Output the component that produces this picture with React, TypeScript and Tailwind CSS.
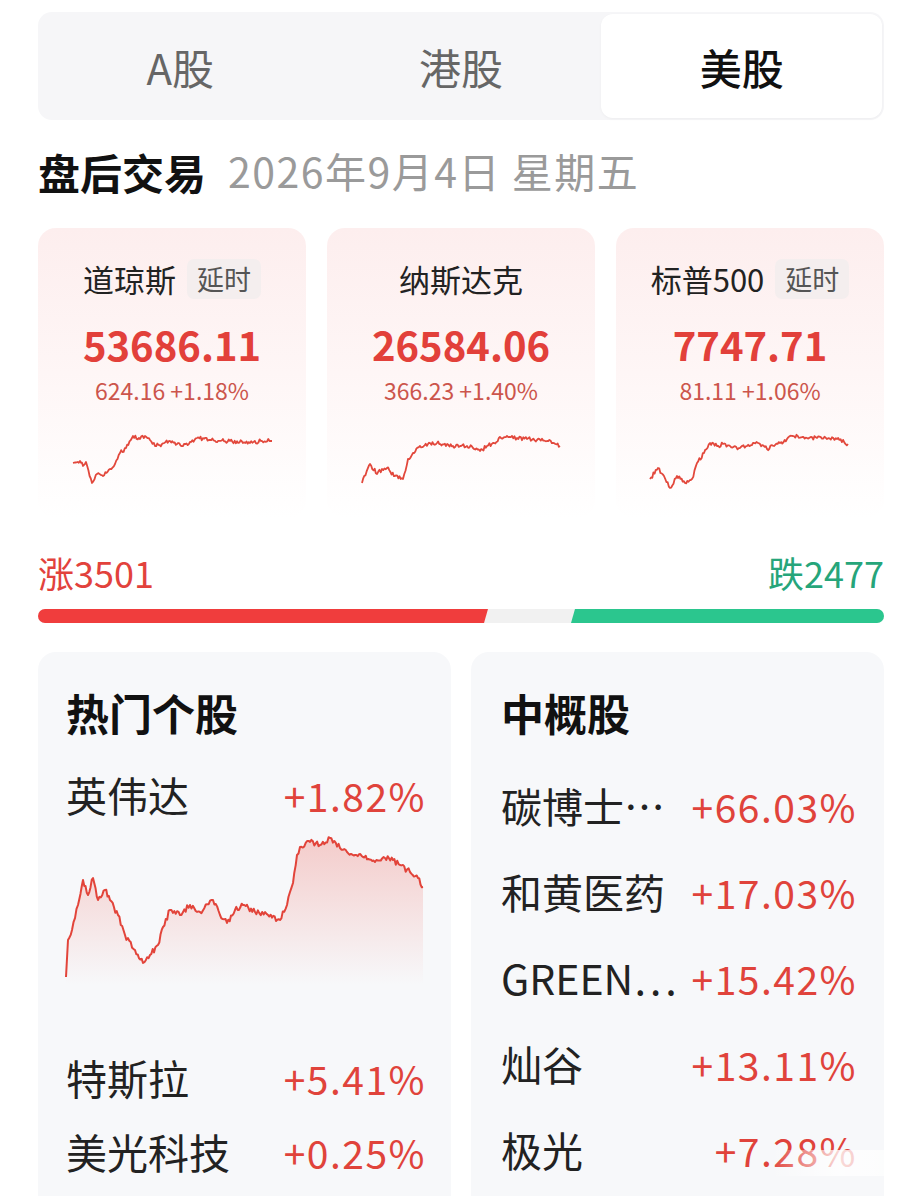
import React from 'react';

type Pt = [number, number];

// small seeded random so the sparkline noise is the same every render
const mulberry = (seed: number) => () => {
  seed |= 0;
  seed = (seed + 0x6d2b79f5) | 0;
  let t = Math.imul(seed ^ (seed >>> 15), 1 | seed);
  t = (t + Math.imul(t ^ (t >>> 7), 61 | t)) ^ t;
  return ((t ^ (t >>> 14)) >>> 0) / 4294967296;
};

const jaggy = (pts: Pt[], step: number, amp: number, seed: number): Pt[] => {
  const rnd = mulberry(seed);
  const out: Pt[] = [];
  for (let i = 0; i < pts.length - 1; i++) {
    const [x0, y0] = pts[i];
    const [x1, y1] = pts[i + 1];
    const n = Math.max(1, Math.round((x1 - x0) / step));
    for (let k = 0; k < n; k++) {
      const t = k / n;
      const x = x0 + (x1 - x0) * t;
      const y = y0 + (y1 - y0) * t + (k === 0 ? 0 : (rnd() - 0.5) * 2 * amp);
      out.push([x, y]);
    }
  }
  out.push(pts[pts.length - 1]);
  return out;
};

const toD = (pts: Pt[]) => pts.map((p, i) => `${i ? 'L' : 'M'}${p[0].toFixed(1)} ${p[1].toFixed(1)}`).join(' ');

const dowPts: Pt[] = [[1,37],[8,35],[11,40],[14,36],[20,57],[25,48],[31,50],[38,43],[43,38],[48,27],[54,22],[61,10],[68,13],[73,10],[78,14],[83,20],[90,18],[98,15],[105,18],[111,20],[118,16],[125,12],[138,14],[158,15],[178,17],[190,15],[200,15]];
const ndqPts: Pt[] = [[1,57],[9,38],[16,48],[21,43],[26,42],[34,50],[42,53],[47,33],[52,27],[59,20],[67,18],[76,17],[85,20],[92,20],[100,20],[106,20],[112,22],[119,25],[126,20],[132,17],[140,12],[146,10],[156,12],[166,13],[176,14],[186,15],[192,17],[199,20]];
const spxPts: Pt[] = [[0,53],[8,42],[14,50],[20,62],[27,50],[35,57],[42,53],[47,37],[54,27],[60,17],[67,20],[73,18],[80,20],[90,22],[97,20],[103,17],[110,18],[117,23],[124,20],[130,17],[137,13],[143,10],[157,12],[167,12],[177,13],[187,13],[198,18]];

// NVDA intraday, coordinates relative to chart box (357 x 150)
const nvdaPts: Pt[] = [[0,142],[2,105],[6,95],[12,70],[17,45],[22,60],[27,43],[32,65],[39,55],[44,65],[52,80],[59,100],[69,115],[77,128],[84,120],[92,110],[97,92],[104,75],[114,80],[124,70],[134,77],[147,65],[154,80],[161,88],[169,75],[177,70],[189,77],[202,80],[214,85],[221,70],[227,48],[231,20],[234,12],[244,7],[254,10],[264,3],[274,13],[281,17],[289,20],[297,22],[309,27],[319,23],[327,25],[334,30],[344,37],[352,43],[357,52]];

const indices = [
  { name: '道琼斯', delay: true, value: '53686.11', change: '624.16 +1.18%', pts: dowPts, seed: 11 },
  { name: '纳斯达克', delay: false, value: '26584.06', change: '366.23 +1.40%', pts: ndqPts, seed: 23 },
  { name: '标普500', delay: true, value: '7747.71', change: '81.11 +1.06%', pts: spxPts, seed: 37 },
];

const china = [
  { name: '碳博士…', pct: '+66.03%' },
  { name: '和黄医药', pct: '+17.03%' },
  { name: 'GREEN…', pct: '+15.42%' },
  { name: '灿谷', pct: '+13.11%' },
  { name: '极光', pct: '+7.28%' },
];

const IndexSpark = ({ pts, seed }: { pts: Pt[]; seed: number }) => (
  <svg width="200" height="62" viewBox="0 0 200 62" className="overflow-visible">
    <path d={toD(jaggy(pts, 1.2, 2, seed))} fill="none" stroke="#e2483c" strokeWidth="1.8" strokeLinejoin="round" />
  </svg>
);

const NvdaChart = () => {
  const line = jaggy(nvdaPts, 1.4, 2.8, 5);
  const d = toD(line);
  return (
    <svg width="357" height="150" viewBox="0 0 357 150" className="overflow-visible">
      <defs>
        <linearGradient id="nv" x1="0" y1="0" x2="0" y2="1">
          <stop offset="0" stopColor="#ec5a50" stopOpacity="0.28" />
          <stop offset="1" stopColor="#ec5a50" stopOpacity="0" />
        </linearGradient>
      </defs>
      <path d={`${d} L357 150 L0 150 Z`} fill="url(#nv)" />
      <path d={d} fill="none" stroke="#e2443a" strokeWidth="2" strokeLinejoin="round" />
    </svg>
  );
};

const pctCls = 'text-[39px] tracking-[1.5px] text-[#e0433b]';
const nameCls = 'text-[41px] text-[#222]';

export default function App() {
  return (
    <div className="relative w-[922px] h-[1196px] overflow-hidden bg-white px-[38px] pt-[12px] font-['Noto_Sans_CJK_SC',sans-serif]">
      {/* market tabs */}
      <div className="flex h-[108px] rounded-[14px] bg-[#f6f6f8] p-[2px]">
        <div className="flex flex-1 items-center justify-center text-[42px] text-[#666]">A股</div>
        <div className="flex flex-1 items-center justify-center text-[42px] text-[#666]">港股</div>
        <div className="flex flex-1 items-center justify-center rounded-[12px] bg-white text-[42px] font-medium text-[#111] shadow-[0_1px_3px_rgba(0,0,0,0.04)]">美股</div>
      </div>

      {/* session header */}
      <div className="mt-[23px] flex h-[56px] items-center">
        <span className="text-[42px] font-bold text-[#111]">盘后交易</span>
        <span className="ml-[22px] text-[41px] tracking-[1.5px] text-[#9a9a9a]">2026年9月4日 星期五</span>
      </div>

      {/* index cards */}
      <div className="mt-[29px] grid grid-cols-3 gap-[21px]">
        {indices.map((ix) => (
          <div key={ix.name} className="flex h-[290px] flex-col items-center rounded-[18px] bg-linear-to-b from-[#fdeeee] via-[#fef6f6] to-white pt-[31px]">
            <div className="flex h-[40px] items-center gap-[11px]">
              <span className="text-[31px] text-[#222]">{ix.name}</span>
              {ix.delay && (
                <span className="flex h-[40px] items-center rounded-[7px] bg-[#f4eeee] px-[10px] text-[27px] text-[#555]">延时</span>
              )}
            </div>
            <div className="mt-[20px] h-[50px] text-[40px] font-bold leading-[50px] text-[#e2403a]">{ix.value}</div>
            <div className="mt-[6px] h-[30px] text-[23px] leading-[30px] text-[#cc554c]">{ix.change}</div>
            <div className="mt-[21px]">
              <IndexSpark pts={ix.pts} seed={ix.seed} />
            </div>
          </div>
        ))}
      </div>

      {/* advancers / decliners */}
      <div className="mt-[32px] flex h-[44px] items-center justify-between text-[36px]">
        <span className="text-[#e2423c]">涨3501</span>
        <span className="text-[#26a57a]">跌2477</span>
      </div>
      <div className="mt-[15px] flex h-[14px] overflow-hidden rounded-[7px] bg-[#f1f1f1]">
        <div className="h-full w-[450px] bg-[#f03d3d] [clip-path:polygon(0_0,100%_0,calc(100%-4px)_100%,0_100%)]" />
        <div className="flex-1" />
        <div className="h-full w-[313px] bg-[#2bc68e] [clip-path:polygon(4px_0,100%_0,100%_100%,0_100%)]" />
      </div>

      {/* bottom panels */}
      <div className="mt-[29px] grid grid-cols-2 gap-[20px]">
        <div className="h-[600px] rounded-[18px] bg-[#f7f8fa] pl-[28px] pr-[25px] pt-[32px]">
          <div className="h-[56px] text-[43px] font-bold leading-[56px] text-[#111]">热门个股</div>
          <div className="mt-[27px] flex h-[56px] items-center justify-between">
            <span className={nameCls}>英伟达</span>
            <span className={pctCls}>+1.82%</span>
          </div>
          <div className="mt-[12px]">
            <NvdaChart />
          </div>
          <div className="mt-[56px] flex h-[74px] items-center justify-between">
            <span className={nameCls}>特斯拉</span>
            <span className={pctCls}>+5.41%</span>
          </div>
          <div className="flex h-[74px] items-center justify-between">
            <span className={nameCls}>美光科技</span>
            <span className={pctCls}>+0.25%</span>
          </div>
        </div>

        <div className="h-[600px] rounded-[18px] bg-[#f7f8fa] pl-[30px] pr-[27px] pt-[32px]">
          <div className="h-[56px] text-[43px] font-bold leading-[56px] text-[#111]">中概股</div>
          <div className="mt-[23px]">
            {china.map((c) => (
              <div key={c.name} className="flex h-[86px] items-center justify-between">
                <span className={nameCls}>{c.name}</span>
                <span className={pctCls}>{c.pct}</span>
              </div>
            ))}
          </div>
        </div>
      </div>

      {/* faint watermark over the corner */}
      <div className="absolute left-[770px] top-[1150px] h-[26px] w-[140px] rounded-[6px] bg-linear-to-r from-white/0 via-white/80 to-white/60" />
    </div>
  );
}
